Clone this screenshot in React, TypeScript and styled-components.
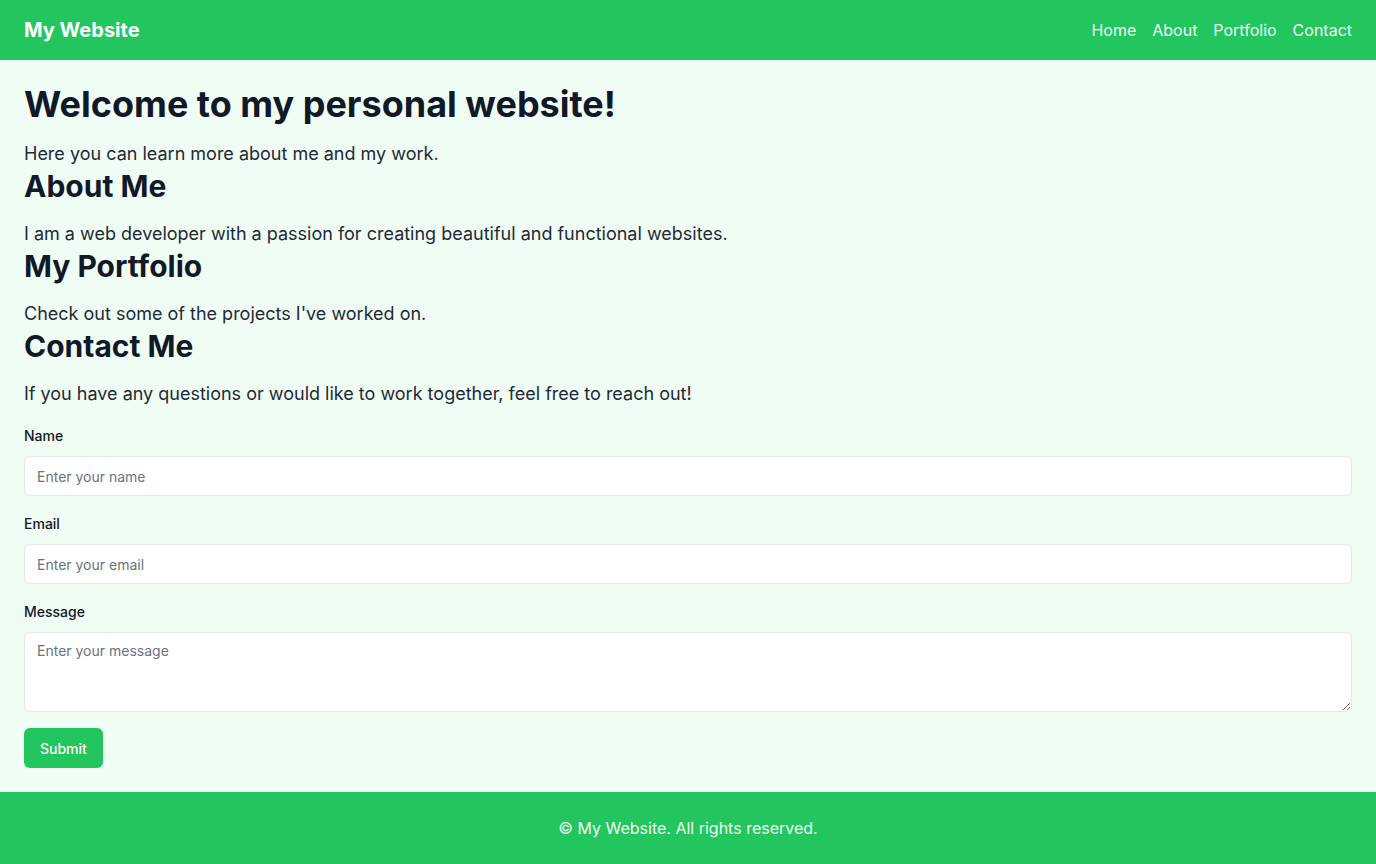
import React from "react";
import styled, { createGlobalStyle } from "styled-components";

const GlobalStyle = createGlobalStyle`
  html, body { margin: 0; padding: 0; }
  body {
    font-family: Inter, "Liberation Sans", sans-serif;
    background: #f0fdf4;
    color: #111827;
  }
  *, *::before, *::after { box-sizing: border-box; }
`;

const Page = styled.div`
  min-height: 864px;
  display: flex;
  flex-direction: column;
  background: #f0fdf4;
`;

const Header = styled.header`
  background: #22c55e;
  height: 60px;
  padding: 0 24px;
  display: flex;
  align-items: center;
  justify-content: space-between;
`;

const Logo = styled.div`
  color: #ffffff;
  font-size: 20px;
  line-height: 28px;
  font-weight: 700;
`;

const Nav = styled.nav`
  display: flex;
  gap: 16px;
`;

const NavLink = styled.a`
  color: #f0fdf4;
  font-size: 16px;
  line-height: 24px;
  text-decoration: none;
`;

const Main = styled.main`
  flex: 1;
  padding: 24px;
`;

const Title = styled.h1`
  margin: 0 0 16px;
  font-size: 36px;
  line-height: 40px;
  font-weight: 700;
  color: #111827;
`;

const Heading = styled.h2`
  margin: 0 0 16px;
  font-size: 30px;
  line-height: 36px;
  font-weight: 700;
  color: #111827;
`;

const Text = styled.p`
  margin: 0;
  font-size: 18px;
  line-height: 28px;
  color: #1f2937;
`;

const Form = styled.form`
  margin-top: 16px;
  display: flex;
  flex-direction: column;
  align-items: flex-start;
`;

const Field = styled.div`
  width: 100%;
  margin-bottom: 16px;
`;

const Label = styled.label`
  display: block;
  font-size: 14px;
  line-height: 24px;
  font-weight: 500;
  color: #111827;
  margin-bottom: 8px;
`;

const controlStyles = `
  width: 100%;
  display: block;
  border: 1px solid #e5e7eb;
  border-radius: 6px;
  background: #ffffff;
  padding: 8px 12px;
  font-family: Inter, "Liberation Sans", sans-serif;
  font-size: 14px;
  line-height: 20px;
  color: #111827;
  outline: none;
  &::placeholder { color: #6b7280; }
`;

const Input = styled.input`
  ${controlStyles}
  height: 40px;
`;

const TextArea = styled.textarea`
  ${controlStyles}
  height: 80px;
  resize: vertical;
  margin: 0;
`;

const Button = styled.button`
  height: 40px;
  padding: 0 16px;
  border: none;
  border-radius: 6px;
  background: #22c55e;
  color: #ffffff;
  font-family: Inter, "Liberation Sans", sans-serif;
  font-size: 14px;
  font-weight: 500;
  cursor: pointer;
`;

const Footer = styled.footer`
  background: #22c55e;
  padding: 24px;
  text-align: center;
  color: #f0fdf4;
  font-size: 16px;
  line-height: 24px;
`;

export default function App() {
  return (
    <Page>
      <GlobalStyle />
      <Header>
        <Logo>My Website</Logo>
        <Nav>
          <NavLink href="#">Home</NavLink>
          <NavLink href="#">About</NavLink>
          <NavLink href="#">Portfolio</NavLink>
          <NavLink href="#">Contact</NavLink>
        </Nav>
      </Header>
      <Main>
        <Title>Welcome to my personal website!</Title>
        <Text>Here you can learn more about me and my work.</Text>
        <Heading>About Me</Heading>
        <Text>I am a web developer with a passion for creating beautiful and functional websites.</Text>
        <Heading>My Portfolio</Heading>
        <Text>Check out some of the projects I've worked on.</Text>
        <Heading>Contact Me</Heading>
        <Text>If you have any questions or would like to work together, feel free to reach out!</Text>
        <Form onSubmit={(e) => e.preventDefault()}>
          <Field>
            <Label htmlFor="name">Name</Label>
            <Input id="name" type="text" placeholder="Enter your name" />
          </Field>
          <Field>
            <Label htmlFor="email">Email</Label>
            <Input id="email" type="email" placeholder="Enter your email" />
          </Field>
          <Field>
            <Label htmlFor="message">Message</Label>
            <TextArea id="message" placeholder="Enter your message" />
          </Field>
          <Button type="submit">Submit</Button>
        </Form>
      </Main>
      <Footer>© My Website. All rights reserved.</Footer>
    </Page>
  );
}
